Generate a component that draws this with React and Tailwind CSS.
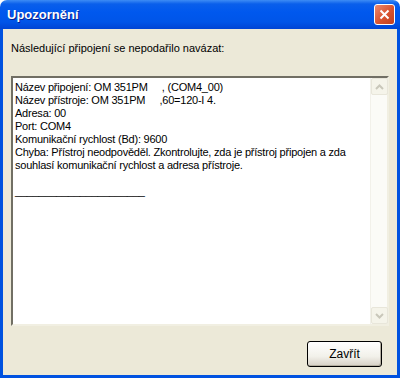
import React from 'react';

const lines = [
  'Název připojení: OM 351PM     , (COM4_00)',
  'Název přístroje: OM 351PM     ,60=120-I 4.',
  'Adresa: 00',
  'Port: COM4',
  'Komunikační rychlost (Bd): 9600',
  'Chyba: Přístroj neodpověděl. Zkontrolujte, zda je přístroj připojen a zda',
  'souhlasí komunikační rychlost a adresa přístroje.',
  '',
  '______________________',
];

function Arrow({ up }) {
  return (
    <div className="w-[17px] h-[17px] rounded-[2px] border border-[#E8E6DA] bg-[#F5F4EA] flex items-center justify-center">
      <svg width="9" height="6" viewBox="0 0 9 6">
        <path
          d={up ? 'M1 5 L4.5 1.5 L8 5' : 'M1 1 L4.5 4.5 L8 1'}
          fill="none"
          stroke="#C9C7BA"
          strokeWidth="2"
        />
      </svg>
    </div>
  );
}

export default function App() {
  return (
    <div className="w-[400px] h-[378px] flex flex-col font-['Liberation_Sans',sans-serif]">
      {/* title bar */}
      <div className="h-[29px] rounded-t-[7px] bg-[linear-gradient(to_bottom,#3D8CF5_0px,#0A5FEB_4px,#0058EE_12px,#0055E8_22px,#0044D4_29px)] flex items-center justify-between pl-[7px] pr-[5px]">
        <span className="text-white text-[13px] font-bold [text-shadow:1px_1px_0_#0A1E8C] mt-[1px]">Upozornění</span>
        <div className="w-[21px] h-[21px] rounded-[3px] border border-white bg-[linear-gradient(135deg,#EB8A70,#D9532F_55%,#C1401F)] flex items-center justify-center">
          <svg width="11" height="11" viewBox="0 0 11 11">
            <path d="M1.5 1.5 L9.5 9.5 M9.5 1.5 L1.5 9.5" stroke="white" strokeWidth="2" />
          </svg>
        </div>
      </div>

      {/* body */}
      <div className="flex-1 flex flex-col bg-[#ECE9D8] border-x-[3px] border-b-[3px] border-[#0052E0] px-[8px] pt-[13px] text-[11px] leading-[13px] text-black">
        <div>Následující připojení se nepodařilo navázat:</div>

        <div className="mt-[21px] h-[250px] flex border-[2px] border-t-[#716F64] border-l-[#716F64] border-b-[#F1EFE2] border-r-[#F1EFE2] bg-white">
          <div className="flex-1 pl-[2px] pt-[3px] whitespace-pre tracking-[-0.22px]">
            {lines.map((l, i) => (
              <div key={i} className="h-[13px]">{l}</div>
            ))}
          </div>
          <div className="w-[17px] bg-[#FBFBF7] border-l border-[#F2F1EA] flex flex-col justify-between">
            <Arrow up />
            <Arrow />
          </div>
        </div>

        <div className="flex justify-end pr-[7px] mt-[15px]">
          <button className="w-[75px] h-[26px] rounded-[3px] border border-black bg-[linear-gradient(to_bottom,#FFFFFF,#F2F1EA_60%,#D6D0C5)] shadow-[inset_-1px_-1px_0_#B3AEA0] text-[12px]">
            Zavřít
          </button>
        </div>
      </div>
    </div>
  );
}
